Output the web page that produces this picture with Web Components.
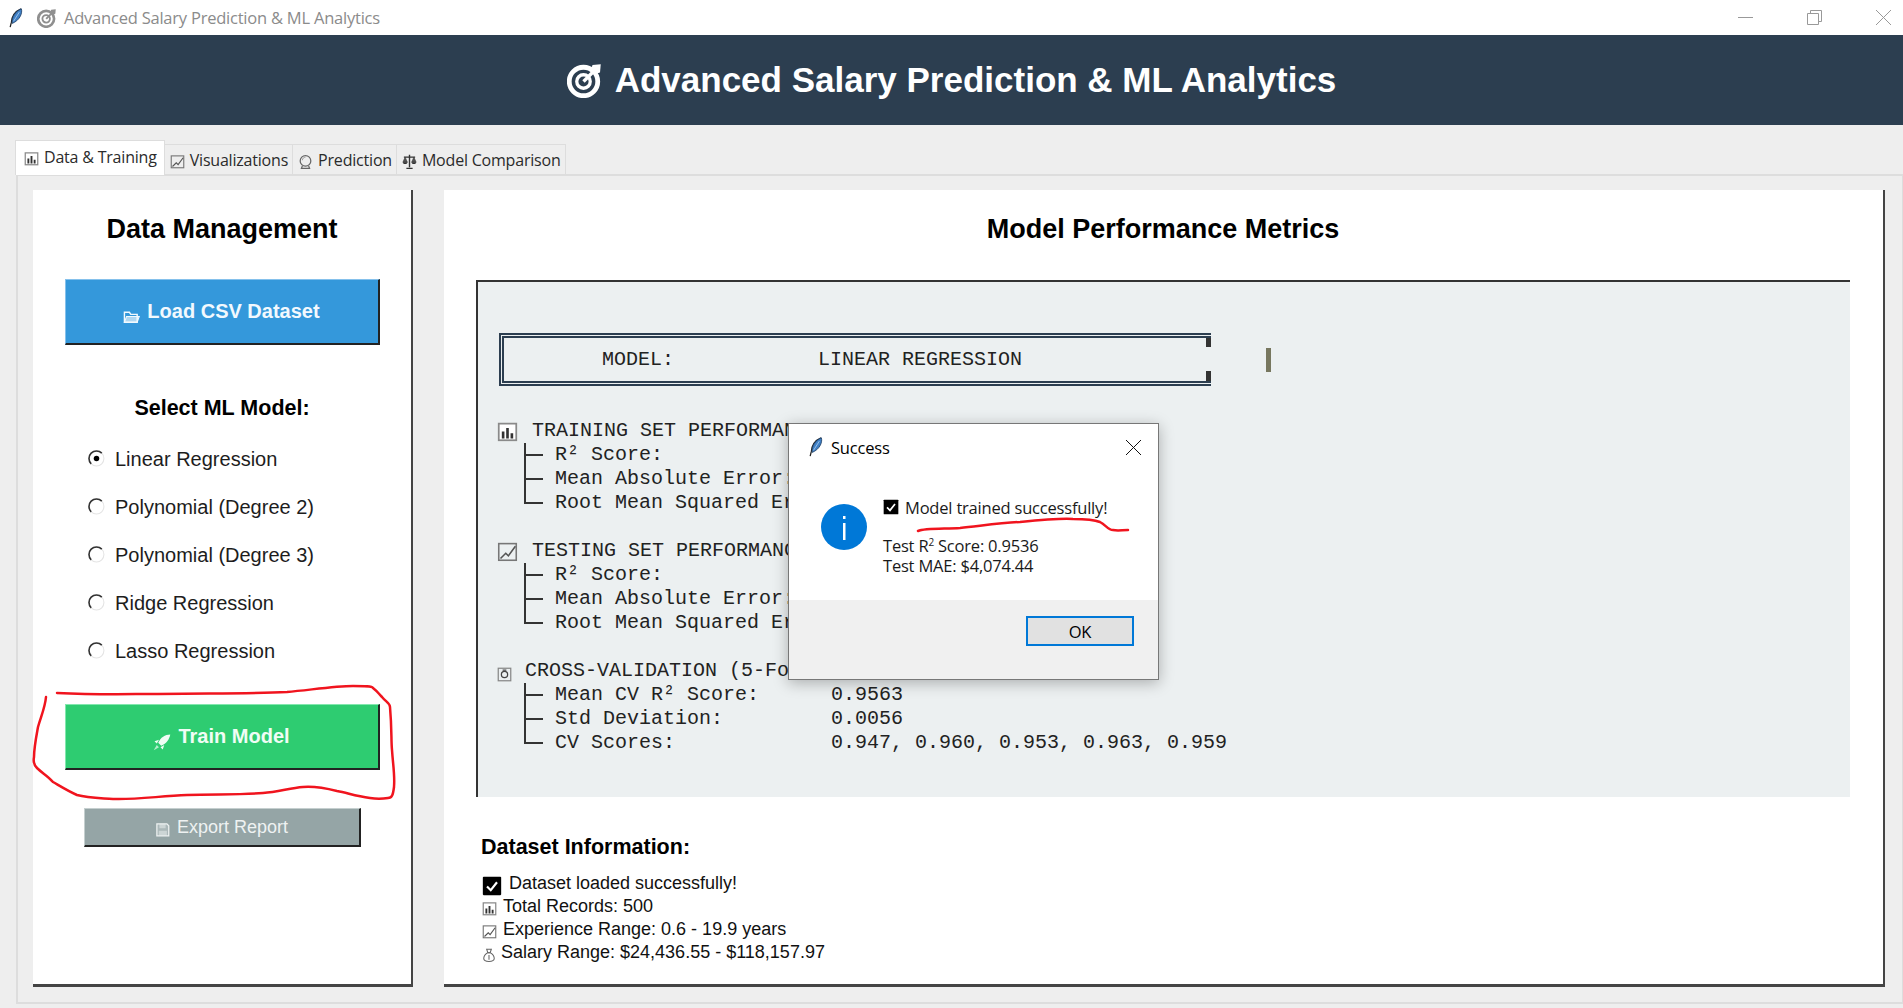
<!DOCTYPE html>
<html>
<head>
<meta charset="utf-8">
<title>Advanced Salary Prediction &amp; ML Analytics</title>
<style>
  html, body { margin: 0; height: 100%; }
  body { overflow: hidden; background: #eeeeee; font-family: "Liberation Sans", Arial, sans-serif; }
</style>
</head>
<body>
<app-window>
  <win-titlebar slot="title">Advanced Salary Prediction &amp; ML Analytics</win-titlebar>
  <app-header slot="header">Advanced Salary Prediction &amp; ML Analytics</app-header>

  <nb-tabs slot="tabs">
    <nb-tab active icon="bars">Data &amp; Training</nb-tab>
    <nb-tab icon="trend">Visualizations</nb-tab>
    <nb-tab icon="ball">Prediction</nb-tab>
    <nb-tab icon="scale">Model Comparison</nb-tab>
  </nb-tabs>

  <side-panel slot="side">
    <span slot="title">Data Management</span>
    <tk-button slot="load" kind="load" icon="folder">Load CSV Dataset</tk-button>
    <span slot="subtitle">Select ML Model:</span>
    <tk-radio slot="radios" checked>Linear Regression</tk-radio>
    <tk-radio slot="radios">Polynomial (Degree 2)</tk-radio>
    <tk-radio slot="radios">Polynomial (Degree 3)</tk-radio>
    <tk-radio slot="radios">Ridge Regression</tk-radio>
    <tk-radio slot="radios">Lasso Regression</tk-radio>
    <tk-button slot="train" kind="train" icon="rocket">Train Model</tk-button>
    <tk-button slot="export" kind="export" icon="floppy">Export Report</tk-button>
  </side-panel>

  <metrics-panel slot="main">
    <span slot="title">Model Performance Metrics</span>
    <model-box slot="box">MODEL:            LINEAR REGRESSION</model-box>
    <metric-section slot="box" icon="bars" heading="TRAINING SET PERFORMANCE">
      <metric-row>R² Score:</metric-row>
      <metric-row>Mean Absolute Error:</metric-row>
      <metric-row last>Root Mean Squared Error:</metric-row>
    </metric-section>
    <metric-section slot="box" icon="trend" heading="TESTING SET PERFORMANCE">
      <metric-row>R² Score:</metric-row>
      <metric-row>Mean Absolute Error:</metric-row>
      <metric-row last>Root Mean Squared Error:</metric-row>
    </metric-section>
    <metric-section slot="box" icon="cycle" small heading="CROSS-VALIDATION (5-Fold)">
      <metric-row value="0.9563">Mean CV R² Score:</metric-row>
      <metric-row value="0.0056">Std Deviation:</metric-row>
      <metric-row last value="0.947, 0.960, 0.953, 0.963, 0.959">CV Scores:</metric-row>
    </metric-section>
    <span slot="info-title">Dataset Information:</span>
    <info-line slot="info" icon="check" size="20" gap="7">Dataset loaded successfully!</info-line>
    <info-line slot="info" icon="bars" size="15" gap="6">Total Records: 500</info-line>
    <info-line slot="info" icon="trend" size="15" gap="6">Experience Range: 0.6 - 19.9 years</info-line>
    <info-line slot="info" icon="bag" size="14" gap="5">Salary Range: $24,436.55 - $118,157.97</info-line>
  </metrics-panel>

  <msg-dialog slot="overlay"></msg-dialog>
  <pen-marks slot="overlay"></pen-marks>
</app-window>

<script>
(function () {
  // all icons in one place, viewBox 0 0 24 24
  const ICONS = {
    feather: '<path d="M18 1C11 4 7 10 6.500 17L5 23" fill="none" stroke="#222" stroke-width="1.500"/><path d="M18.500 1C20 7 16 15 7.500 18.500C6.500 11 11 4 18.500 1Z" fill="#3f7fc4" stroke="#1d3f66" stroke-width="1"/><path d="M16 5L9 16" stroke="#a9cdf0" stroke-width="1"/>',
    target: '<circle cx="11" cy="13" r="9.500" fill="none" stroke="currentColor" stroke-width="3.200"/><circle cx="11" cy="13" r="4.500" fill="none" stroke="currentColor" stroke-width="2.200"/><path d="M11 13L20 4" stroke="currentColor" stroke-width="2.200"/><path d="M17 2L22.500 1.500L22 7L19 8L16 5Z" fill="currentColor"/>',
    bars: '<rect x="2" y="3" width="20" height="19" fill="#fff" stroke="#8a8a8a" stroke-width="2"/><path d="M7 20V12M12 20V8M17 20V14" stroke="#333" stroke-width="3"/>',
    trend: '<rect x="2" y="3" width="20" height="19" fill="none" stroke="#777" stroke-width="1.800"/><path d="M4 20L10 14L13 17L21 6" fill="none" stroke="#555" stroke-width="1.800"/>',
    ball: '<circle cx="12" cy="11" r="8.500" fill="none" stroke="#666" stroke-width="2"/><path d="M7 10C7 7 9 5.500 12 5" fill="none" stroke="#999" stroke-width="1.500"/><path d="M7 19L5.500 23H18.500L17 19" fill="none" stroke="#666" stroke-width="2"/>',
    scale: '<path d="M12 1V21M7 23H17M3 5H21" stroke="#333" stroke-width="2.200"/><path d="M5 5L1.500 13H8.500ZM19 5L15.500 13H22.500Z" fill="#555" stroke="#333"/><path d="M1 13C2 17 8 17 9 13ZM15 13C16 17 22 17 23 13Z" fill="#333"/>',
    folder: '<path d="M2 6H9L11 9H20V20H2Z" fill="none" stroke="currentColor" stroke-width="2"/><path d="M5 12H23L20 20H2Z" fill="currentColor" fill-opacity=".65" stroke="currentColor" stroke-width="1.500"/>',
    rocket: '<path d="M23 2C16 2 10 6 7 13L11 17C18 14 22 8 23 2Z" fill="currentColor"/><path d="M8 9L2 11L5 14ZM15 16L13 22L10 19Z" fill="currentColor"/><path d="M5 16L1 23L8 19Z" fill="currentColor" fill-opacity=".7"/>',
    floppy: '<path d="M3 3H19L22 6V22H3Z" fill="currentColor" fill-opacity=".25" stroke="currentColor" stroke-width="2"/><rect x="7" y="3" width="10" height="7" fill="currentColor" fill-opacity=".5"/><rect x="6" y="14" width="13" height="8" fill="currentColor" fill-opacity=".5"/>',
    cycle: '<rect x="2" y="2" width="20" height="20" fill="none" stroke="#888" stroke-width="2"/><circle cx="12" cy="12" r="5" fill="none" stroke="#444" stroke-width="2"/><path d="M9 5H15" stroke="#444" stroke-width="2"/>',
    bag: '<path d="M8 2H16L14 8H10Z" fill="none" stroke="#666" stroke-width="1.800"/><path d="M10 8C5 11 3 15 3 18C3 21 6 23 12 23C18 23 21 21 21 18C21 15 19 11 14 8Z" fill="none" stroke="#666" stroke-width="1.800"/><path d="M12 12V20" stroke="#666" stroke-width="1.800"/>',
    check: '<rect x="1" y="1" width="22" height="22" rx="1" fill="#000"/><path d="M6 12.500L10.500 17L18 7.500" fill="none" stroke="#fff" stroke-width="2.600"/>'
  }

  class UiIcon extends HTMLElement {
    connectedCallback () {
      const size = this.getAttribute('size') || 18
      const root = this.attachShadow({ mode: 'open' })
      root.innerHTML = `<style>:host{display:inline-flex;flex:none;width:${size}px;height:${size}px}svg{width:100%;height:100%;display:block}</style>
        <svg viewBox="0 0 24 24">${ICONS[this.getAttribute('name')] || ''}</svg>`
    }
  }
  customElements.define('ui-icon', UiIcon)

  // small helper: element with a fixed shadow template
  function simple (tag, html) {
    const template = document.createElement('template')
    template.innerHTML = html
    customElements.define(tag, class extends HTMLElement {
      constructor () {
        super()
        this.attachShadow({ mode: 'open' }).appendChild(template.content.cloneNode(true))
      }
    })
  }

  // ---- window shell ----
  simple('app-window', `
    <style>
      :host { display: flex; flex-direction: column; position: relative; width: 1903px; height: 1008px; overflow: hidden; }
      .book { flex: none; box-sizing: border-box; display: flex; gap: 31px; width: 1887px; height: 830px; margin-left: 16px;
              padding: 14px 15px 15px 15px; border: 2px solid #dddddd; border-right-width: 1px; }
    </style>
    <slot name="title"></slot>
    <slot name="header"></slot>
    <slot name="tabs"></slot>
    <div class="book"><slot name="side"></slot><slot name="main"></slot></div>
    <slot name="overlay"></slot>
  `)

  simple('win-titlebar', `
    <style>
      :host { display: flex; align-items: center; height: 35px; background: #fff; color: #8b8b8b;
              font: 16.500px "Open Sans", sans-serif; letter-spacing: -.22px; }
      .feather { margin: 0 0 0 6px; }
      .target { margin: 0 0 0 11px; color: #8f8f8f; }
      .txt { margin-left: 7px; flex: 1; }
      .ctl { display: flex; margin-right: 12px; gap: 54px; }
      svg { width: 15px; height: 15px; display: block; }
    </style>
    <ui-icon class="feather" name="feather" size="20"></ui-icon>
    <ui-icon class="target" name="target" size="20"></ui-icon>
    <span class="txt"><slot></slot></span>
    <div class="ctl">
      <svg viewBox="0 0 15 15"><path d="M0 7.500H15" stroke="#999"/></svg>
      <svg viewBox="0 0 15 15" fill="none" stroke="#999"><path d="M.5 3.500H11.500V14.500H.5Z"/><path d="M3.500 3.500V.5H14.500V11.500H11.500"/></svg>
      <svg viewBox="0 0 15 15"><path d="M0 0L15 15M15 0L0 15" stroke="#999"/></svg>
    </div>
  `)

  simple('app-header', `
    <style>
      :host { display: flex; align-items: center; justify-content: center; gap: 12px; height: 90px; box-sizing: border-box;
              background: #2c3e50; color: #fff; font: bold 35px "Liberation Sans", Arial, sans-serif; padding-right: 0; }
    </style>
    <ui-icon name="target" size="36"></ui-icon>
    <span><slot></slot></span>
  `)

  // ---- tabs ----
  simple('nb-tabs', `
    <style>
      :host { display: flex; align-items: flex-end; height: 15px; padding: 0 0 0 16px; margin-top: 15px; height: 35px; margin-bottom: -1px; position: relative; z-index: 1; }
    </style>
    <slot></slot>
  `)

  class NbTab extends HTMLElement {
    connectedCallback () {
      const active = this.hasAttribute('active')
      const root = this.attachShadow({ mode: 'open' })
      root.innerHTML = `<style>
        :host { display: flex; align-items: center; gap: 5px; box-sizing: border-box; height: ${active ? 35 : 31}px;
                padding: ${active ? '0 7px 3px 8px' : '0 4px 0 5px'}; background: ${active ? '#fff' : '#eeeeee'};
                border: 1px solid #dddddd; border-bottom: ${active ? 'none' : '1px solid #dddddd'}; margin-left: -1px;
                color: #2b2b2b; font: 16px "Open Sans", sans-serif; letter-spacing: -.2px; white-space: nowrap; }
        ui-icon { position: relative; top: 2px; }
      </style><ui-icon name="${this.getAttribute('icon')}" size="15"></ui-icon><span><slot></slot></span>`
    }
  }
  customElements.define('nb-tab', NbTab)

  // ---- left column ----
  simple('side-panel', `
    <style>
      :host { display: flex; flex-direction: column; align-items: center; box-sizing: border-box; flex: none; width: 380px; height: 797px;
              background: #fff; border-right: 2px solid #444; border-bottom: 3px solid #444; color: #000; }
      .title { margin-top: 23px; font: bold 27px/32px "Liberation Sans", Arial, sans-serif; }
      .load { margin-top: 34px; }
      .sub { margin-top: 50px; font: bold 21.500px/26px "Liberation Sans", Arial, sans-serif; }
      .radios { align-self: stretch; margin-top: 14px; padding-left: 55px; display: flex; flex-direction: column; }
      .train { margin-top: 29px; }
      .export { margin-top: 38px; }
    </style>
    <div class="title"><slot name="title"></slot></div>
    <div class="load"><slot name="load"></slot></div>
    <div class="sub"><slot name="subtitle"></slot></div>
    <div class="radios"><slot name="radios"></slot></div>
    <div class="train"><slot name="train"></slot></div>
    <div class="export"><slot name="export"></slot></div>
  `)

  class TkButton extends HTMLElement {
    connectedCallback () {
      const kind = this.getAttribute('kind')
      const conf = {
        load: { w: 315, h: 66, bg: '#3498db', lt: '#85c1ec', font: 'bold 20px', ic: 17, col: '#f2f9fe', drop: 5 },
        train: { w: 315, h: 66, bg: '#2ecc71', lt: '#82e8ae', font: 'bold 20px', ic: 18, col: '#f0fdf5', drop: 5 },
        export: { w: 277, h: 39, bg: '#95a5a6', lt: '#c5cfcf', font: '18px', ic: 15, col: '#eef2f2', drop: 2 }
      }[kind]
      const root = this.attachShadow({ mode: 'open' })
      root.innerHTML = `<style>
        :host { display: flex; align-items: center; justify-content: center; gap: 7px; box-sizing: border-box;
                width: ${conf.w}px; height: ${conf.h}px; background: ${conf.bg}; color: ${conf.col};
                border: 2px solid; border-color: ${conf.lt} #222 #222 ${conf.lt}; border-width: 1px 2px 2px 1px;
                font: ${conf.font} "Liberation Sans", Arial, sans-serif; }
        ui-icon { position: relative; top: ${conf.drop}px; }
      </style><ui-icon name="${this.getAttribute('icon')}" size="${conf.ic}"></ui-icon><span><slot></slot></span>`
    }
  }
  customElements.define('tk-button', TkButton)

  class TkRadio extends HTMLElement {
    connectedCallback () {
      const dot = this.hasAttribute('checked') ? '<circle cx="8" cy="8" r="2.600" fill="#000"/>' : ''
      const root = this.attachShadow({ mode: 'open' })
      root.innerHTML = `<style>
        :host { display: flex; align-items: center; gap: 10px; height: 48px; color: #1d1d1d; font: 20px "Liberation Sans", Arial, sans-serif; }
        svg { width: 17px; height: 17px; flex: none; position: relative; top: -1px; }
      </style><svg viewBox="0 0 16 16"><circle cx="8" cy="8" r="7" fill="#fff" stroke="#e4e4e4"/><path d="M13 3A7 7 0 1 0 3 13" fill="none" stroke="#333" stroke-width="1.500"/>${dot}</svg><span><slot></slot></span>`
    }
  }
  customElements.define('tk-radio', TkRadio)

  // ---- right column ----
  simple('metrics-panel', `
    <style>
      :host { display: flex; flex-direction: column; flex: none; box-sizing: border-box; width: 1441px; height: 797px; padding: 0 33px 0 32px;
              background: #fff; border-right: 2px solid #444; border-bottom: 3px solid #444; color: #000; }
      .title { margin-top: 23px; text-align: center; font: bold 27px/32px "Liberation Sans", Arial, sans-serif; }
      .box { box-sizing: border-box; height: 517px; margin-top: 35px; background: #ecf0f1; padding-top: 51px;
             border-left: 2px solid #333; border-top: 2px solid #333; }
      .info-title { margin: 37px 0 0 5px; font: bold 21.500px/26px "Liberation Sans", Arial, sans-serif; }
      .info { margin: 12px 0 0 6px; }
    </style>
    <div class="title"><slot name="title"></slot></div>
    <div class="box"><slot name="box"></slot></div>
    <div class="info-title"><slot name="info-title"></slot></div>
    <div class="info"><slot name="info"></slot></div>
  `)

  simple('model-box', `
    <style>
      :host { display: flex; align-items: center; margin: 0 0 33px 21px; font: 20px "Liberation Mono", monospace; color: #222; }
      .frame { box-sizing: border-box; width: 712px; height: 53px; padding-left: 98px; display: flex; align-items: center; white-space: pre;
               border: 5px double #2c3e50; border-right: none;
               background: linear-gradient(#333,#333) right top / 5px 9px no-repeat, linear-gradient(#333,#333) right bottom / 5px 10px no-repeat; }
      .bar { width: 5px; height: 24px; margin-left: 55px; background: #77775f; }
    </style>
    <div class="frame"><slot></slot></div><div class="bar"></div>
  `)

  class MetricSection extends HTMLElement {
    connectedCallback () {
      const small = this.hasAttribute('small')
      const root = this.attachShadow({ mode: 'open' })
      root.innerHTML = `<style>
        :host { display: block; margin: 0 0 24px 17px; font: 20px/24px "Liberation Mono", monospace; color: #222; }
        .head { display: flex; align-items: center; height: 24px; padding-left: 2px; white-space: pre; }
        ui-icon { margin-right: ${small ? 13 : 14}px; ${small ? 'position: relative; top: 3px;' : ''} }
      </style><div class="head"><ui-icon name="${this.getAttribute('icon')}" size="${small ? 15 : 21}"></ui-icon><span>${this.getAttribute('heading')}</span></div><slot></slot>`
    }
  }
  customElements.define('metric-section', MetricSection)

  class MetricRow extends HTMLElement {
    connectedCallback () {
      const val = this.getAttribute('value') || ''
      const stop = this.hasAttribute('last') ? '12px' : '100%'
      const root = this.attachShadow({ mode: 'open' })
      root.innerHTML = `<style>
        :host { display: flex; height: 24px; padding-left: 24px; white-space: pre; }
        .tree { flex: none; width: 36px; background:
          linear-gradient(#333,#333) 5px 0 / 2px ${stop} no-repeat,
          linear-gradient(#333,#333) 5px 11px / 19px 2px no-repeat; }
        .lbl { flex: none; width: 276px; }
      </style><div class="tree"></div><div class="lbl"><slot></slot></div><div>${val}</div>`
    }
  }
  customElements.define('metric-row', MetricRow)

  class InfoLine extends HTMLElement {
    connectedCallback () {
      const root = this.attachShadow({ mode: 'open' })
      root.innerHTML = `<style>
        :host { display: flex; align-items: center; height: 23px; color: #111; font: 18px "Liberation Sans", Arial, sans-serif; white-space: pre; }
        ui-icon { margin-right: ${this.getAttribute('gap')}px; position: relative; top: 2px; }
      </style><ui-icon name="${this.getAttribute('icon')}" size="${this.getAttribute('size')}"></ui-icon><span><slot></slot></span>`
    }
  }
  customElements.define('info-line', InfoLine)

  // ---- message box ----
  simple('msg-dialog', `
    <style>
      :host { position: absolute; left: 788px; top: 423px; box-sizing: border-box; width: 371px; height: 257px; display: flex; flex-direction: column;
              background: #fff; border: 1px solid #777; box-shadow: 0 3px 14px rgba(0,0,0,.28);
              font: 16.500px "Open Sans", sans-serif; letter-spacing: -.2px; color: #1a1a1a; }
      .cap { display: flex; align-items: center; height: 46px; padding: 0 17px 0 17px; color: #000; }
      .cap span { flex: 1; margin-left: 5px; }
      .cap svg { width: 15px; height: 15px; }
      .body { flex: 1; display: flex; padding: 11px 0 0 32px; }
      .info { width: 46px; height: 46px; flex: none; margin-top: 35px; margin-top: 34px; }
      .txt { margin: 26px 0 0 16px; }
      .m { display: flex; align-items: center; gap: 6px; height: 22px; }
      .d { margin-top: 18px; line-height: 20px; }
      sup { font-size: 10px; line-height: 0; }
      .foot { height: 63px; flex: none; background: #f0f0f0; display: flex; align-items: flex-start; justify-content: flex-end; padding: 16px 24px 0 0; }
      .ok { box-sizing: border-box; width: 108px; height: 30px; display: flex; align-items: center; justify-content: center;
            background: #e1e1e1; border: 2px solid #0078d7; color: #000; }
    </style>
    <div class="cap"><ui-icon name="feather" size="20"></ui-icon><span>Success</span>
      <svg viewBox="0 0 15 15"><path d="M0 0L15 15M15 0L0 15" stroke="#111"/></svg></div>
    <div class="body" style="padding-top:0">
      <svg class="info" viewBox="0 0 46 46"><circle cx="23" cy="23" r="23" fill="#0078d7"/><rect x="22" y="19" width="2.500" height="17" fill="#fff"/><rect x="22" y="12" width="2.500" height="3" fill="#fff"/></svg>
      <div class="txt">
        <div class="m"><ui-icon name="check" size="16"></ui-icon><span>Model trained successfully!</span></div>
        <div class="d">Test R<sup>2</sup> Score: 0.9536<br>Test MAE: $4,074.44</div>
      </div>
    </div>
    <div class="foot"><div class="ok">OK</div></div>
  `)

  // ---- red pen annotation drawn over the screenshot ----
  simple('pen-marks', `
    <style>
      :host { position: absolute; left: 0; top: 0; width: 1903px; height: 1008px; pointer-events: none; }
      svg { width: 100%; height: 100%; display: block; }
      path { fill: none; stroke: #f0141e; stroke-width: 2.500; stroke-linecap: round; stroke-linejoin: round; }
    </style>
    <svg viewBox="0 0 1903 1008">
      <path d="M57 693C100 695 130 694 153 694C200 693 250 694 287 692C310 690 335 686 353 686C365 686 372 686 373 688C378 692 378 693 382 697C386 702 390 703 390 707C392 730 391 740 392 750C393 765 395 775 394 787C393 795 392 798 388 798C382 799 376 799 370 798C355 796 348 793 337 791C325 788 315 786 303 787C290 788 278 792 263 793C240 795 215 794 187 795C160 796 135 800 113 799C100 798 88 798 77 795C68 791 60 786 53 782C48 776 42 773 37 768C34 765 33 762 34 757C34 748 36 738 38 727C41 716 45 708 46 697"/>
      <path d="M918 531C925 528 945 529 960 528C980 526 1000 523 1020 522C1040 520 1060 518 1073 519C1085 519 1095 520 1100 522C1106 525 1108 530 1113 530C1118 531 1122 530 1128 530"/>
    </svg>
  `)
})()
</script>
</body>
</html>
